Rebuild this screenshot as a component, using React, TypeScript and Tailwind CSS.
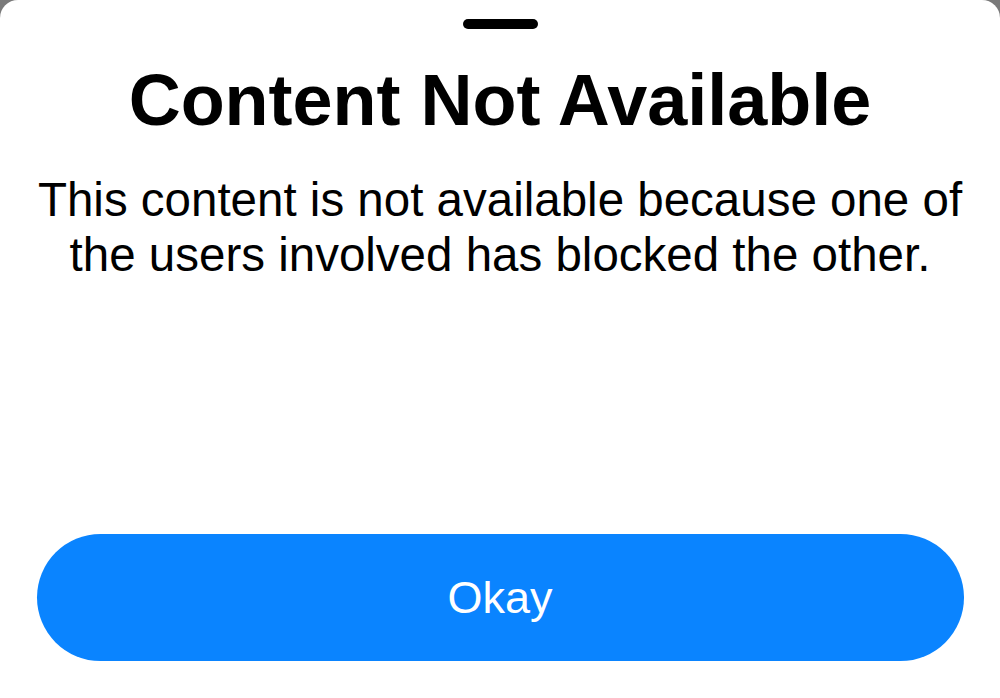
import React from "react";

export default function App() {
  return (
    <div className="w-[1000px] h-[698px] bg-[#7a7a7a] overflow-hidden" style={{ fontFamily: '"Liberation Sans", Arial, sans-serif' }}>
      <div className="w-full h-full bg-white rounded-t-[18px] flex flex-col items-center">
        <div className="mt-[19px] w-[75px] h-[10px] rounded-full bg-black" />
        <h1 className="mt-[29px] text-[72px] leading-[85px] font-bold text-black text-center">
          Content Not Available
        </h1>
        <p className="mt-[29px] px-[30px] text-[47.5px] leading-[55px] text-black text-center">
          This content is not available because one of the users involved has blocked the other.
        </p>
        <div className="flex-1" />
        <button className="mb-[37px] w-[927px] h-[127px] rounded-full bg-[#0a84ff] text-white text-[45px] flex items-center justify-center">
          Okay
        </button>
      </div>
    </div>
  );
}
